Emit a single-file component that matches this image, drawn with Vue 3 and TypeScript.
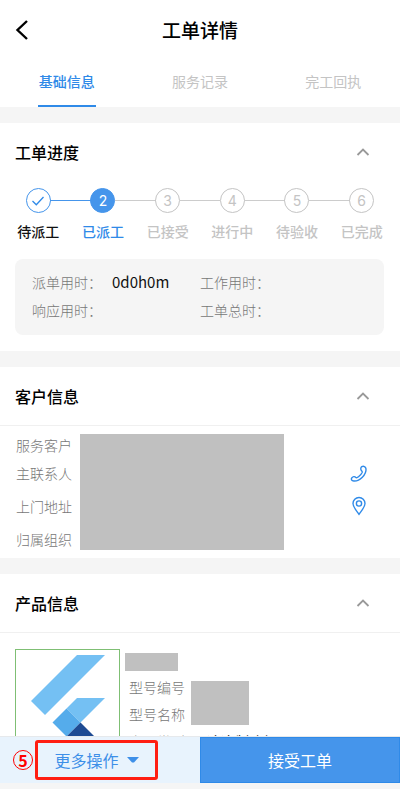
<script setup lang="ts">
import { ref } from 'vue'

interface Step { label: string; state: 'done' | 'current' | 'todo' }
interface Stat { label: string; value: string }

const tabs: string[] = ['基础信息', '服务记录', '完工回执']
const activeTab = ref<number>(0)

const steps: Step[] = [
  { label: '待派工', state: 'done' },
  { label: '已派工', state: 'current' },
  { label: '已接受', state: 'todo' },
  { label: '进行中', state: 'todo' },
  { label: '待验收', state: 'todo' },
  { label: '已完成', state: 'todo' },
]

const stats: Stat[] = [
  { label: '派单用时', value: '0d0h0m' },
  { label: '工作用时', value: '' },
  { label: '响应用时', value: '' },
  { label: '工单总时', value: '' },
]

const open = ref({ progress: true, customer: true, product: true })
</script>

<template>
  <div class="page">
    <header class="topbar">
      <button class="back" type="button" aria-label="返回">
        <svg width="14" height="22" viewBox="0 0 14 22"><path d="M13 2 3.500 11l9.500 9" fill="none" stroke="#000" stroke-width="2.4" /></svg>
      </button>
      <h1>工单详情</h1>
    </header>

    <nav class="tabs">
      <button
        v-for="(tab, i) in tabs"
        :key="tab"
        type="button"
        class="tab"
        :class="{ active: i === activeTab }"
        @click="activeTab = i"
      ><span>{{ tab }}</span></button>
    </nav>

    <main class="content">
      <section class="card progress">
        <div class="card-head">
          <h2>工单进度</h2>
          <button type="button" class="toggle" aria-label="收起工单进度" @click="open.progress = !open.progress">
            <svg width="14" height="10" viewBox="0 0 14 10"><path d="m1.5 8 5.500-5.500L12.500 8" /></svg>
          </button>
        </div>
        <template v-if="open.progress">
          <ol class="steps">
            <li v-for="(step, i) in steps" :key="step.label" class="step" :class="step.state">
              <span class="dot">
                <svg v-if="step.state === 'done'" width="14" height="12" viewBox="0 0 14 12"><path d="m1.500 6 3.800 3.800L12.500 2" fill="none" stroke="#2f8ae8" stroke-width="1.300" /></svg>
                <template v-else>{{ i + 1 }}</template>
              </span>
              <span class="step-label">{{ step.label }}</span>
            </li>
          </ol>
          <dl class="stats">
            <div v-for="stat in stats" :key="stat.label" class="stat">
              <dt>{{ stat.label }}：</dt>
              <dd>{{ stat.value }}</dd>
            </div>
          </dl>
        </template>
      </section>

      <section class="card">
        <div class="card-head lined">
          <h2>客户信息</h2>
          <button type="button" class="toggle" aria-label="收起客户信息" @click="open.customer = !open.customer">
            <svg width="14" height="10" viewBox="0 0 14 10"><path d="m1.5 8 5.500-5.500L12.500 8" /></svg>
          </button>
        </div>
        <div v-if="open.customer" class="customer">
          <div class="labels">
            <span>服务客户</span>
            <span>主联系人</span>
            <span>上门地址</span>
            <span>归属组织</span>
          </div>
          <div class="mask customer-mask"></div>
          <div class="actions">
            <a href="#phone" aria-label="拨打电话">
              <svg width="18" height="18" viewBox="0 0 18 18"><path d="M11.800 1.700C13.500.6 15.700 1.600 16 3.800c.5 5.700-6.100 12.600-12.200 12.200-2.200-.2-3.200-1.800-1.900-3.200 1.100-1.200 2.700-1.700 3.700-.5.8.9 1.700.5 2.900-.5 1.700-1.300 3-2.900 3.700-4.300.3-.7-.1-1.100-.7-1.800-1.100-1.200-.9-3.200.3-4Z" /></svg>
            </a>
            <a href="#map" aria-label="查看地图">
              <svg width="18" height="20" viewBox="0 0 18 20"><path d="M9 18.300C6.300 14.500 3 10.900 3 7.500a6 6 0 0 1 12 0c0 3.400-3.300 7-6 10.800Z" /><circle cx="9" cy="7.500" r="2.600" /></svg>
            </a>
          </div>
        </div>
      </section>

      <section class="card">
        <div class="card-head lined">
          <h2>产品信息</h2>
          <button type="button" class="toggle" aria-label="收起产品信息" @click="open.product = !open.product">
            <svg width="14" height="10" viewBox="0 0 14 10"><path d="m1.5 8 5.500-5.500L12.500 8" /></svg>
          </button>
        </div>
        <div v-if="open.product" class="product">
          <div class="thumb">
            <svg width="103" height="103" viewBox="0 0 103 103">
              <path d="M61 5h28L29 65 15 51Z" fill="#74c0f3" />
              <path d="M61 48h28L64.500 72.500 50.500 58.500Z" fill="#74c0f3" />
              <path d="m50.500 58.500 14 14-14 14-14-14Z" fill="#55aceb" />
              <path d="m64.500 72.500 24 24H61L50.500 86.500Z" fill="#1e4b93" />
            </svg>
          </div>
          <div class="product-info">
            <div class="mask name-mask"></div>
            <div class="product-rows">
              <div class="labels">
                <span>型号编号</span>
                <span>型号名称</span>
                <span>产品类型</span>
              </div>
              <div class="values">
                <div class="mask model-mask"></div>
                <span class="value">冷冻制冰机</span>
              </div>
            </div>
          </div>
        </div>
      </section>
    </main>

    <footer class="bottom">
      <div class="more">
        <span class="marker">5</span>
        <button type="button" class="more-button">
          更多操作
          <svg width="12" height="6" viewBox="0 0 12 6"><path d="M0 0h12L7 5.500H5Z" fill="#3d8fe8" /></svg>
        </button>
      </div>
      <button type="button" class="accept">接受工单</button>
    </footer>
  </div>
</template>

<style>
body {
  margin: 0;
  background: #fff;
}
</style>

<style scoped>
* {
  box-sizing: border-box;
}
.page {
  display: flex;
  flex-direction: column;
  height: 100vh;
  padding-right: 3px;
  font-family: "Noto Sans CJK SC", sans-serif;
  font-size: 14px;
  line-height: 20px;
  color: #111;
  background: #fff;
}
button {
  font: inherit;
  color: inherit;
  background: none;
  border: 0;
  padding: 0;
}
h1, h2, ol, dl, dd {
  margin: 0;
  padding: 0;
}
h1, h2 {
  font-weight: 500;
  color: #000;
}
svg {
  display: block;
}
.topbar {
  display: grid;
  grid-template-columns: 24px 1fr 24px;
  align-items: center;
  flex: none;
  height: 59px;
  padding: 0 14px;
}
h1 {
  text-align: center;
  font-size: 19px;
  line-height: 28px;
}
.tabs {
  display: grid;
  grid-template-columns: repeat(3, 1fr);
  flex: none;
  height: 48px;
}
.tab {
  display: flex;
  justify-content: center;
  color: #c4c4c4;
}
.tab span {
  display: flex;
  align-items: center;
  height: 48px;
  padding: 0 1px 2px;
  border-bottom: 2px solid transparent;
}
.tab.active {
  color: #2f8ae8;
  font-weight: 500;
}
.tab.active span {
  border-color: #2f8ae8;
}
.content {
  flex: 1;
  min-height: 0;
  overflow: hidden;
}
.card {
  border-top: 16px solid #f5f5f5;
}
.card-head {
  display: flex;
  align-items: center;
  justify-content: space-between;
  height: 57px;
  padding: 0 30px 0 15px;
}
.card-head.lined {
  height: 59px;
  border-bottom: 1px solid #f0f0f0;
}
h2 {
  font-size: 16px;
  line-height: 24px;
}
.toggle path {
  fill: none;
  stroke: #999;
  stroke-width: 1.8;
}
.progress {
  padding-bottom: 16px;
}
.steps {
  display: grid;
  grid-template-columns: repeat(6, 1fr);
  padding: 8px 6px 0;
  list-style: none;
}
.step {
  position: relative;
  display: flex;
  flex-direction: column;
  align-items: center;
  gap: 8px;
  color: #c4c4c4;
  font-weight: 500;
}
.step:not(:last-child)::after {
  content: "";
  position: absolute;
  top: 12px;
  left: calc(50% + 12px);
  width: calc(100% - 24px);
  height: 1px;
  background: #ccc;
}
.step.done:not(:last-child)::after {
  background: #4595eb;
}
.dot {
  display: flex;
  align-items: center;
  justify-content: center;
  width: 25px;
  height: 25px;
  border: 1px solid #c4c4c4;
  border-radius: 50%;
  font: 14px/20px Inter, sans-serif;
}
.done .dot {
  border-color: #4595eb;
}
.current .dot {
  border-color: #4595eb;
  background: #4595eb;
  color: #fff;
}
.done .step-label {
  color: #111;
}
.current .step-label {
  color: #2f8ae8;
}
.stats {
  display: grid;
  grid-template-columns: 168px 1fr;
  row-gap: 8px;
  margin: 18px 16px 0 15px;
  padding: 13px 17px 15px;
  background: #f5f5f5;
  border-radius: 8px;
}
.stat {
  display: flex;
  gap: 10px;
}
dd {
  font-size: 15px;
}
dt, .labels {
  color: #777;
  font-weight: 300;
}
.customer {
  display: flex;
  align-items: flex-start;
  gap: 8px;
  padding: 8px 32px 3px 16px;
}
.customer .labels {
  display: grid;
  grid-template-rows: 22px 33px 33px 33px;
  align-items: center;
}
.mask {
  background: #c0c0c0;
}
.customer-mask {
  width: 204px;
  height: 116px;
}
.actions {
  display: flex;
  flex-direction: column;
  align-items: center;
  gap: 13px;
  margin-left: auto;
  padding-top: 31px;
}
.actions svg {
  fill: none;
  stroke: #2f8ae8;
  stroke-width: 1.4;
}
.product {
  display: flex;
  gap: 5px;
  padding: 16px 15px;
}
.thumb {
  width: 105px;
  height: 105px;
  border: 1px solid #7fbf74;
}
.product-info {
  padding-top: 4px;
}
.name-mask {
  width: 53px;
  height: 18px;
}
.product-rows {
  display: flex;
  gap: 6px;
  padding: 6px 0 0 4px;
}
.product-rows .labels {
  display: flex;
  flex-direction: column;
  gap: 7px;
}
.values {
  display: flex;
  flex-direction: column;
  gap: 6px;
  padding-top: 4px;
}
.value {
  padding-left: 16px;
}
.model-mask {
  width: 58px;
  height: 44px;
}
.bottom {
  display: grid;
  grid-template-columns: 1fr 1fr;
  flex: none;
  height: 53px;
  border-top: 1px solid #e6e9ec;
  border-bottom: 6px solid #f5f5f5;
  font-size: 16px;
  line-height: 24px;
}
.more {
  display: flex;
  align-items: center;
  gap: 2px;
  padding-left: 13px;
  background: #e8f3fd;
}
.marker {
  width: 20px;
  height: 20px;
  border: 1px solid #f00;
  border-radius: 50%;
  color: #f00;
  font-size: 16px;
  font-weight: 700;
  line-height: 18px;
  text-align: center;
}
.more-button {
  display: flex;
  align-items: center;
  justify-content: center;
  gap: 8px;
  width: 123px;
  height: 40px;
  border: 3px solid #ff1e12;
  border-radius: 3px;
  color: #3d8fe8;
}
.accept {
  background: #4595eb;
  border: 1px solid #2f8ae8;
  color: #fff;
}
.more-button, .accept {
  font-weight: 400;
}
</style>
